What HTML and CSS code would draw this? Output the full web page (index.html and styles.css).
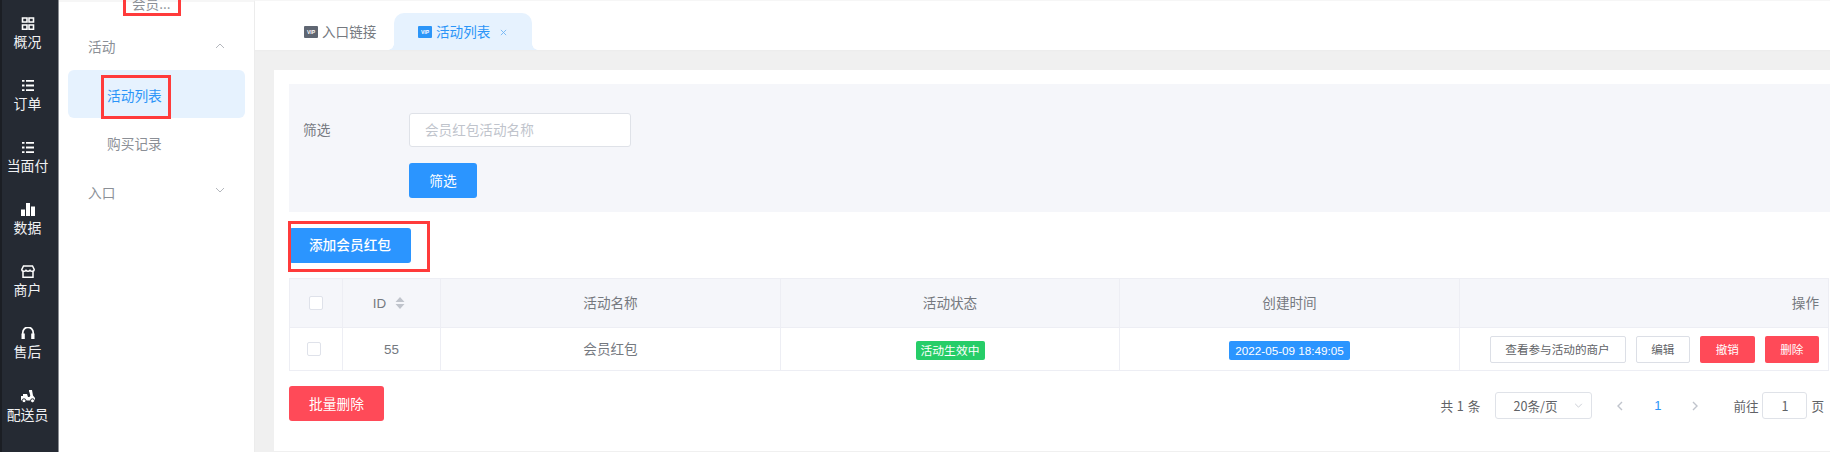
FILE: index.html
```html
<!DOCTYPE html>
<html lang="zh-CN">
<head>
<meta charset="utf-8">
<title>活动列表</title>
<link rel="stylesheet" href="styles.css">
</head>
<body>
<div class="app">
  <nav class="rail">
    <a class="rail-item"><svg class="rail-icon" viewBox="0 0 14 13"><path d="M1.500 1h4.500v4h-4.500zM8 1h4.500v4h-4.500zM1.500 8h4.500v4.300h-4.500zM8 8h4.500v4.300h-4.500z" fill="none" stroke="#fff" stroke-width="1.600"/></svg><span>概况</span></a>
    <a class="rail-item"><svg class="rail-icon" viewBox="0 0 14 13"><path d="M1 1h2.500v1.800h-2.500zM5 1h8v1.800h-8zM1 5.600h2.500v1.800h-2.500zM5 5.600h8v1.800h-8zM1 10.200h2.500v1.800h-2.500zM5 10.200h8v1.800h-8z" fill="#fff"/></svg><span>订单</span></a>
    <a class="rail-item"><svg class="rail-icon" viewBox="0 0 14 13"><path d="M1 1h2.500v1.800h-2.500zM5 1h8v1.800h-8zM1 5.600h2.500v1.800h-2.500zM5 5.600h8v1.800h-8zM1 10.200h2.500v1.800h-2.500zM5 10.200h8v1.800h-8z" fill="#fff"/></svg><span>当面付</span></a>
    <a class="rail-item"><svg class="rail-icon" viewBox="0 0 14 13"><path d="M0 6.500h4v6.500h-4zM5 0h4v13h-4zM10 3.500h4v9.500h-4z" fill="#fff"/></svg><span>数据</span></a>
    <a class="rail-item"><svg class="rail-icon" viewBox="0 0 14 13"><path d="M2.500 1h9l1.700 3.500c0 1.200-1 1.800-2.100 1.800-0.800 0-1.600-0.300-2.050-1-0.500 0.700-1.200 1-2.050 1s-1.550-0.300-2.050-1c-0.450 0.700-1.250 1-2.050 1-1.100 0-2.100-0.600-2.100-1.800zM2 7v5.200h10v-5.200" fill="none" stroke="#fff" stroke-width="1.500"/></svg><span>商户</span></a>
    <a class="rail-item"><svg class="rail-icon" viewBox="0 0 14 13"><path d="M1.800 8v-2.500a5.200 5.200 0 0 1 10.400 0v2.500" fill="none" stroke="#fff" stroke-width="1.700"/><path d="M0.500 6.500h3.300v5.500h-3.300zM10.200 6.500h3.300v5.500h-3.300z" fill="#fff"/></svg><span>售后</span></a>
    <a class="rail-item"><svg class="rail-icon" viewBox="0 0 14 13"><path d="M8 0h3l1 5.500 2 2.500v2.500h-14v-4.500h2v-2h4l1 3h1.500l0.800-1.500-1-3.800h-0.300z" fill="#fff"/><circle cx="3" cy="10.800" r="2" fill="#fff" stroke="#252a33"/><circle cx="11.500" cy="10.800" r="2" fill="#fff" stroke="#252a33"/></svg><span>配送员</span></a>
    <a class="rail-item"><svg class="rail-icon" viewBox="0 0 14 13"><circle cx="7" cy="3" r="3" fill="#fff"/><path d="M1 13c0-3 3-4.500 6-4.500s6 1.500 6 4.500z" fill="#fff"/></svg></a>
  </nav>

  <aside class="submenu">
    <div class="submenu-title">会员...</div>
    <div class="group-head first"><span>活动</span><svg class="chev" viewBox="0 0 10 6"><path d="M1 5l4-4 4 4" fill="none" stroke="#b4b7bd" stroke-width="1"/></svg></div>
    <div class="sub-item active"><span>活动列表</span></div>
    <div class="sub-item plain"><span>购买记录</span></div>
    <div class="group-head"><span>入口</span><svg class="chev" viewBox="0 0 10 6"><path d="M1 1l4 4 4-4" fill="none" stroke="#b4b7bd" stroke-width="1"/></svg></div>
    <i class="mark mark-title"></i>
    <i class="mark mark-item"></i>
  </aside>

  <main class="main">
    <header class="tabs">
      <div class="tab">
        <svg class="vip" viewBox="0 0 14 12"><rect width="14" height="12" rx="1" fill="#5f6672"/><text x="7" y="8" text-anchor="middle" class="vip-text">VIP</text></svg>
        <span class="tab-text">入口链接</span>
      </div>
      <div class="tab current">
        <svg class="vip" viewBox="0 0 14 12"><rect width="14" height="12" rx="1" fill="#2b95f8"/><text x="7" y="8" text-anchor="middle" class="vip-text">VIP</text></svg>
        <span class="tab-text">活动列表</span>
        <svg class="tab-close" viewBox="0 0 8 8"><path d="M1 1l6 6M7 1l-6 6" stroke="#6fb4f5" stroke-width="1"/></svg>
      </div>
    </header>

    <section class="content">
      <div class="card">
        <form class="filter">
          <div class="filter-row">
            <label class="filter-label">筛选</label>
            <div class="fake-input">会员红包活动名称</div>
          </div>
          <button type="button" class="btn btn-blue btn-filter">筛选</button>
        </form>

        <div class="add-row">
          <button type="button" class="btn btn-blue btn-add">添加会员红包</button>
          <i class="mark mark-add"></i>
        </div>

        <div class="table">
          <div class="tr thead">
            <div class="td c-check"><i class="check check-head"></i></div>
            <div class="td c-id id-head"><span class="latin">ID</span><svg class="sort" viewBox="0 0 10 12"><path d="M5 0l4.500 5h-9zM5 12l4.500-5h-9z" fill="#c0c4cc"/></svg></div>
            <div class="td c-name">活动名称</div>
            <div class="td c-status">活动状态</div>
            <div class="td c-time">创建时间</div>
            <div class="td c-ops"><span class="ops-label">操作</span></div>
          </div>
          <div class="tr tbody">
            <div class="td c-check"><i class="check"></i></div>
            <div class="td c-id"><span class="latin">55</span></div>
            <div class="td c-name">会员红包</div>
            <div class="td c-status"><span class="tag tag-green">活动生效中</span></div>
            <div class="td c-time"><span class="tag tag-blue">2022-05-09 18:49:05</span></div>
            <div class="td c-ops">
              <button type="button" class="mini mini-plain mini-wide">查看参与活动的商户</button>
              <button type="button" class="mini mini-plain">编辑</button>
              <button type="button" class="mini mini-red">撤销</button>
              <button type="button" class="mini mini-red">删除</button>
            </div>
          </div>
        </div>

        <div class="foot">
          <button type="button" class="btn btn-red">批量删除</button>
          <div class="pager">
            <span class="total">共 1 条</span>
            <div class="page-size"><span>20条/页</span><svg class="size-chev" viewBox="0 0 10 6"><path d="M1 1l4 4 4-4" fill="none" stroke="#c0c4cc" stroke-width="1"/></svg></div>
            <svg class="arrow arrow-prev" viewBox="0 0 6 10"><path d="M5 1l-4 4 4 4" fill="none" stroke="#c0c4cc" stroke-width="1.400"/></svg>
            <span class="page-no">1</span>
            <svg class="arrow arrow-next" viewBox="0 0 6 10"><path d="M1 1l4 4-4 4" fill="none" stroke="#c0c4cc" stroke-width="1.400"/></svg>
            <span class="goto">前往</span>
            <div class="page-input">1</div>
            <span class="page-unit">页</span>
          </div>
        </div>
      </div>
    </section>
  </main>
</div>
</body>
</html>
```
FILE: styles.css
```css
* { box-sizing: border-box; }
html, body { margin: 0; height: 100%; overflow: hidden; }
body {
  font-family: "Noto Sans CJK SC", "Liberation Sans", sans-serif;
  font-size: 13.6px;
  color: #606266;
  background: #fff;
}
button { font-family: inherit; cursor: pointer; }

.app { display: flex; width: 1830px; height: 452px; overflow: hidden; }

/* dark rail */
.rail {
  flex: 0 0 59px;
  height: 452px;
  padding: 17px 5px 0 0;
  background: #252a33;
  border-left: 2px solid #1b1e24;
  border-right: 1px solid #8b8e94;
  overflow: hidden;
}
.rail-item {
  display: flex;
  flex-direction: column;
  align-items: center;
  height: 62.1px;
  color: #f0f1f3;
  font-size: 13.9px;
  line-height: 20px;
  white-space: nowrap;
}
.rail-icon { width: 14px; height: 13px; margin-bottom: 1px; flex: none; }

/* submenu */
.submenu {
  position: relative;
  flex: 0 0 196px;
  height: 452px;
  padding: 22px 9px 0 9px;
  background: #fff;
  border-top: 2px solid #f6f6f6;
  border-right: 1px solid #ececec;
}
.submenu-title {
  position: absolute;
  top: -9px;
  left: 73px;
  color: #8b8f96;
  font-size: 13.6px;
  line-height: 20px;
}
.group-head {
  display: flex;
  align-items: center;
  justify-content: space-between;
  height: 48px;
  padding: 0 20px 0 20px;
  color: #8b8f96;
  font-size: 13.7px;
}
.group-head.first { height: 46px; padding-bottom: 2px; }
.group-head .chev { width: 10px; height: 6px; margin-top: -4px; }
.group-head.first .chev { margin-top: -1px; }
.sub-item {
  height: 48px;
  display: flex;
  align-items: center;
  padding-left: 39px;
  border-radius: 6px;
  color: #8b8f96;
  font-size: 13.7px;
}
.sub-item.active { padding-top: 1px; background: #e6f2fe; color: #2b95f8; }
.sub-item.plain { margin-top: 2px; padding-bottom: 2px; }

/* main */
.main { flex: 1; min-width: 0; display: flex; flex-direction: column; background: #f0f0f0; }
.tabs {
  display: flex;
  align-items: flex-end;
  flex: 0 0 50px;
  background: #fff;
  border-top: 1px solid #f6f6f6;
  box-shadow: 0 1px 1px #ededed;
}
.tab {
  display: flex;
  align-items: center;
  gap: 4px;
  height: 37px;
  font-size: 13.6px;
  color: #75797f;
}
.tab-text { padding-bottom: 2px; }
.tab:first-child { margin-left: 49px; width: 90px; }
.tab.current {
  position: relative;
  width: 138px;
  padding-left: 24px;
  background: #e6f2fe;
  color: #2b95f8;
  border-radius: 10px 10px 0 0;
}
.tab.current::before, .tab.current::after {
  content: "";
  position: absolute;
  bottom: 0;
  width: 6px;
  height: 6px;
  background: radial-gradient(circle at 0 0, transparent 5.500px, #e6f2fe 6px);
}
.tab.current::before { left: -6px; }
.tab.current::after { right: -6px; transform: scaleX(-1); }
.vip { width: 14px; height: 12px; flex: none; }
.vip-text { font-family: "Liberation Sans", sans-serif; font-size: 5px; font-weight: 700; fill: #fff; }
.tab-close { width: 7px; height: 7px; margin-left: 6px; margin-top: 2px; }

.content { flex: 1; padding: 20px 0 0 19px; min-height: 0; }
.card { height: 381px; padding: 14px 0 0 15px; background: #fff; }

/* filter */
.filter {
  height: 128px;
  padding: 29px 0 0 14px;
  background: #f5f6fa;
}
.filter-row { display: flex; align-items: center; height: 34px; }
.filter-label { width: 106px; padding-bottom: 2px; color: #75797f; font-size: 13.7px; }
.fake-input {
  width: 222px;
  height: 34px;
  padding-left: 15px;
  line-height: 30px;
  background: #fff;
  border: 1px solid #dfe2e8;
  border-radius: 3px;
  color: #c0c4cc;
  font-size: 13.6px;
}
.btn {
  display: block;
  height: 35px;
  padding: 0 0 2px;
  border: 0;
  border-radius: 3px;
  color: #fff;
  font-size: 13.7px;
}
.btn-blue { background: #2b95ff; }
.btn-red { background: #ff4a58; width: 95px; }
.btn-filter { width: 68px; margin: 16px 0 0 106px; }

.add-row { position: relative; height: 66px; padding-top: 16px; }
.btn-add { width: 122px; padding-bottom: 4px; font-weight: 500; }

/* table */
.table { width: 1540px; border: 1px solid #edeef4; }
.tr { display: flex; }
.thead { height: 49px; background: #f5f6fa; border-bottom: 1px solid #edeef4; color: #75797f; }
.tbody { height: 42px; color: #75797f; }
.td {
  display: flex;
  align-items: center;
  justify-content: center;
  border-right: 1px solid #edeef4;
  font-size: 13.6px;
}
.td:last-child { border-right: 0; }
.c-check { flex: 0 0 53px; }
.c-id { flex: 0 0 98px; }
.id-head { gap: 9px; padding-right: 5px; }
.latin { font-family: "Liberation Sans", sans-serif; font-size: 13.4px; }
.c-name { flex: 0 0 340px; padding-bottom: 2px; }
.c-status { flex: 0 0 339px; padding-bottom: 2px; }
.c-time { flex: 0 0 340px; padding-bottom: 2px; }
.c-ops { flex: 1; justify-content: flex-end; gap: 10px; padding-right: 9px; }
.ops-label { padding-bottom: 2px; }
.check { display: block; width: 14px; height: 14px; margin-left: -4px; background: #fff; border: 1px solid #dfe2ea; border-radius: 2px; }
.check-head { margin-left: 0; }
.sort { width: 10px; height: 12px; }
.tag {
  display: inline-block;
  height: 19px;
  margin-top: 4px;
  padding: 0 5px;
  border-radius: 2px;
  color: #fff;
  font-size: 11.8px;
  line-height: 18px;
  white-space: nowrap;
}
.tag-green { background: #26cd68; }
.tag-blue { background: #2b95ff; padding: 0 6px; font-family: "Liberation Sans", sans-serif; font-size: 11.7px; line-height: 19px; }
.mini {
  width: 54.500px;
  height: 27px;
  padding: 0;
  border-radius: 2px;
  font-size: 11.6px;
}
.mini-wide { width: 136px; }
.mini-plain { background: #fff; border: 1px solid #dcdfe6; color: #606266; }
.mini-red { background: #ff4a58; border: 0; color: #fff; }

/* footer */
.foot { display: flex; justify-content: space-between; margin-top: 15px; }
.pager { display: flex; flex: none; align-items: center; height: 27px; margin: 6px 6px 0 0; color: #606266; font-size: 12.6px; }
.total { width: 55px; white-space: nowrap; word-spacing: 1px; }
.page-size {
  display: flex;
  align-items: center;
  justify-content: space-between;
  width: 97px;
  height: 27px;
  padding: 0 8px 0 17px;
  border: 1px solid #dfe2e8;
  border-radius: 3px;
}
.size-chev { width: 9px; height: 5px; }
.arrow { width: 6px; height: 10px; flex: none; }
.arrow-prev { margin-left: 25px; }
.page-no { width: 69px; text-align: center; color: #2b95f8; font-family: "Liberation Sans", sans-serif; font-size: 13px; }
.arrow-next { margin-right: 35px; }
.goto { width: 29px; white-space: nowrap; }
.page-input {
  width: 45px;
  height: 27px;
  line-height: 25px;
  text-align: center;
  border: 1px solid #dfe2e8;
  border-radius: 3px;
}
.page-unit { margin-left: 4px; }

/* red annotation rectangles drawn over the screenshot */
.mark { position: absolute; display: block; border: 3px solid #ff3b3b; pointer-events: none; }
.mark-title { left: 64px; top: -5px; width: 58px; height: 19px; }
.mark-item { left: 42px; top: 73px; width: 70px; height: 44px; }
.mark-add { left: -1px; top: 9px; width: 142px; height: 51px; }
```
